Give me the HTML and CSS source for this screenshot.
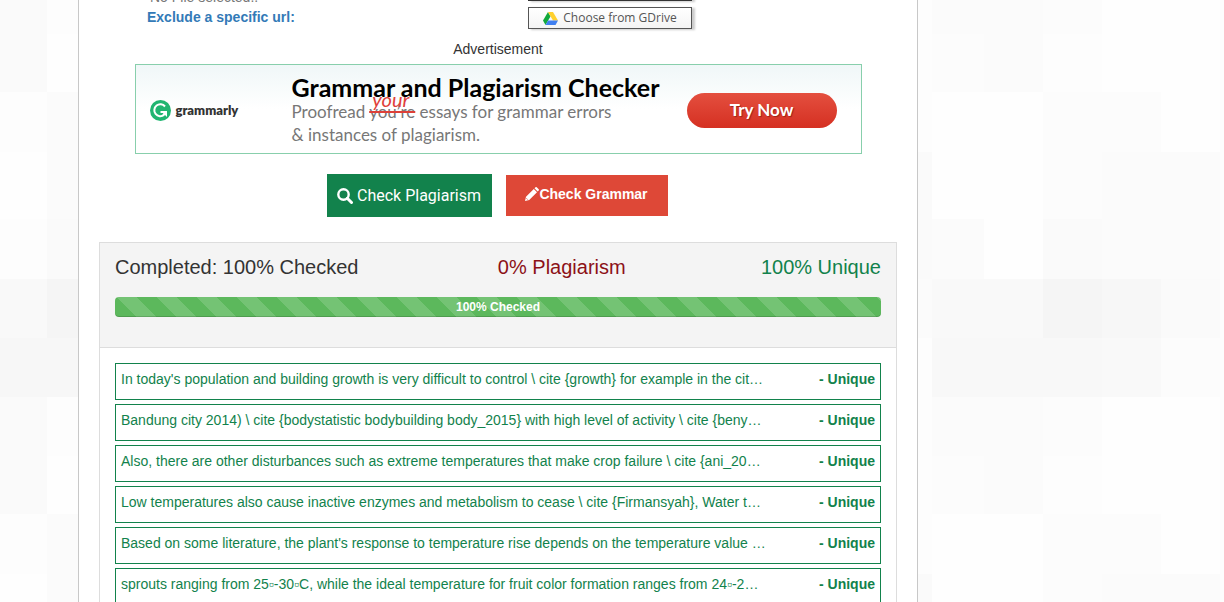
FILE: index.html
```html
<!DOCTYPE html>
<html lang="en">
<head>
<meta charset="utf-8">
<meta name="viewport" content="width=device-width, initial-scale=1">
<title>Plagiarism Checker</title>
<link rel="stylesheet" href="styles.css">
</head>
<body>
<svg class="backdrop" aria-hidden="true">
  <defs>
    <pattern id="tiles" x="0" y="-330" width="1920" height="422" patternUnits="userSpaceOnUse">
      <rect width="1920" height="422" fill="#fdfdfd"/>
      <rect y="60" width="47" height="67" fill="#fefefe"/>
      <rect y="187" width="47" height="59" fill="#f9f9f9"/>
      <rect y="246" width="47" height="59" fill="#f7f7f7"/>
      <rect y="305" width="47" height="117" fill="#fafafa"/>
      <rect x="47" y="0" width="60" height="127" fill="#fbfbfb"/>
      <rect x="47" y="127" width="60" height="60" fill="#fafafa"/>
      <rect x="47" y="187" width="60" height="59" fill="#f5f5f5"/>
      <rect x="47" y="246" width="60" height="59" fill="#f7f7f7"/>
      <rect x="47" y="305" width="60" height="59" fill="#fdfdfd"/>
      <rect x="47" y="364" width="60" height="58" fill="#fefefe"/>
      <rect x="900" y="60" width="32" height="127" fill="#fafafa"/>
      <rect x="900" y="187" width="32" height="59" fill="#fbfbfb"/>
      <rect x="932" y="0" width="111" height="127" fill="#fefefe"/>
      <rect x="932" y="127" width="52" height="60" fill="#fbfbfb"/>
      <rect x="984" y="127" width="59" height="60" fill="#fefefe"/>
      <rect x="932" y="187" width="111" height="59" fill="#f9f9f9"/>
      <rect x="932" y="246" width="170" height="59" fill="#f8f8f8"/>
      <rect x="932" y="305" width="52" height="59" fill="#fbfbfb"/>
      <rect x="932" y="364" width="52" height="58" fill="#fcfcfc"/>
      <rect x="984" y="305" width="59" height="117" fill="#fbfbfb"/>
      <rect x="1043" y="0" width="59" height="127" fill="#fcfcfc"/>
      <rect x="1043" y="127" width="59" height="60" fill="#fafafa"/>
      <rect x="1043" y="187" width="59" height="59" fill="#f5f5f5"/>
      <rect x="1043" y="305" width="59" height="59" fill="#fcfcfc"/>
      <rect x="1102" y="0" width="59" height="60" fill="#fcfcfc"/>
      <rect x="1102" y="60" width="59" height="127" fill="#fbfbfb"/>
      <rect x="1102" y="187" width="59" height="59" fill="#f7f7f7"/>
      <rect x="1102" y="246" width="59" height="59" fill="#f9f9f9"/>
      <rect x="1102" y="305" width="118" height="117" fill="#fefefe"/>
      <rect x="1161" y="0" width="59" height="60" fill="#fefefe"/>
      <rect x="1161" y="60" width="59" height="127" fill="#fbfbfb"/>
      <rect x="1161" y="187" width="59" height="59" fill="#fafafa"/>
      <rect x="1161" y="246" width="59" height="59" fill="#fcfcfc"/>
    </pattern>
  </defs>
  <rect width="100%" height="100%" fill="url(#tiles)"/>
</svg>

<div class="layout">
  <main class="page">
    <section class="sources">
      <div class="source-labels">
        <span class="file-status">No File selected..</span>
        <span class="exclude">Exclude a specific url:</span>
      </div>
      <div class="pickers">
        <button class="picker picker-dark" type="button" aria-label="Choose file"></button>
        <button class="picker" type="button">
          <svg class="drive" viewBox="0 0 30 26" aria-hidden="true">
            <path fill="#12a83c" d="M10 0 15 9 5 26 0 17z"/>
            <path fill="#ffd02e" d="M10 0h10l10 17H20z"/>
            <path fill="#3f7ff0" d="M10 17h20l-5 9H5z"/>
          </svg>
          <span>Choose from GDrive</span>
        </button>
      </div>
    </section>

    <p class="ad-label">Advertisement</p>
    <aside class="ad">
      <div class="brand">
        <svg class="brand-mark" viewBox="0 0 42 42" aria-hidden="true">
          <circle cx="21" cy="21" r="21" fill="#20b571"/>
          <path fill="none" stroke="#fff" stroke-width="4" d="M30 13A12 12 0 1 0 28 30"/>
          <path fill="#fff" d="M21 22h13v12l-4-4-3 2-2-3 2-3h-6z"/>
        </svg>
        <span>grammarly</span>
      </div>
      <div class="ad-copy">
        <strong class="ad-title">Grammar and Plagiarism Checker</strong>
        <span class="ad-line">Proofread <span class="fix"><span class="wrong">you’re</span><span class="right">your</span></span> essays for grammar errors</span>
        <span class="ad-line">&amp; instances of plagiarism.</span>
      </div>
      <button class="try" type="button">Try Now</button>
    </aside>

    <div class="actions">
      <button class="check check-plagiarism" type="button">
        <svg class="glass" viewBox="0 0 16 16" aria-hidden="true"><circle cx="6.500" cy="6.500" r="5.200" fill="none" stroke="#fff" stroke-width="2.400"/><path d="M10.300 10.300 14.500 14.500" stroke="#fff" stroke-width="3" stroke-linecap="round"/></svg>
        <span>Check Plagiarism</span>
      </button>
      <button class="check check-grammar" type="button">
        <svg class="pencil" viewBox="0 0 14 14" aria-hidden="true"><path fill="#fff" d="M0 14 1 9.800 8.800 2 12 5.200 4.200 13zM9.500 1.300 10.500.3Q11.100-.2 11.700.3L13.700 2.300Q14.200 2.900 13.700 3.500L12.700 4.500z"/><path stroke="#de4837" stroke-width=".7" d="M1.300 11.200 2.800 12.700"/></svg>
        <span>Check Grammar</span>
      </button>
    </div>

    <section class="report">
      <header class="summary">
        <div class="totals">
          <span>Completed: 100% Checked</span>
          <span class="plagiarised">0% Plagiarism</span>
          <span class="unique">100% Unique</span>
        </div>
        <div class="progress" role="progressbar" aria-valuenow="100" aria-valuemin="0" aria-valuemax="100">100% Checked</div>
      </header>
      <ul class="results">
        <li class="result"><span>In today's population and building growth is very difficult to control \ cite {growth} for example in the cit…</span><strong>- Unique</strong></li>
        <li class="result"><span>Bandung city 2014) \ cite {bodystatistic bodybuilding body_2015} with high level of activity \ cite {beny…</span><strong>- Unique</strong></li>
        <li class="result"><span>Also, there are other disturbances such as extreme temperatures that make crop failure \ cite {ani_20…</span><strong>- Unique</strong></li>
        <li class="result"><span>Low temperatures also cause inactive enzymes and metabolism to cease \ cite {Firmansyah}, Water t…</span><strong>- Unique</strong></li>
        <li class="result"><span>Based on some literature, the plant's response to temperature rise depends on the temperature value …</span><strong>- Unique</strong></li>
        <li class="result"><span>sprouts ranging from 25▫-30▫C, while the ideal temperature for fruit color formation ranges from 24▫-2…</span><strong>- Unique</strong></li>
      </ul>
    </section>
  </main>
</div>
</body>
</html>
```
FILE: styles.css
```css
* { box-sizing: border-box; }

body {
  margin: 0;
  height: 100vh;
  overflow: hidden;
  color: #333;
  font: 14px/20px "Liberation Sans", Arial, sans-serif;
}

button { border: 0; cursor: pointer; }

.backdrop {
  position: fixed;
  z-index: -1;
  inset: 0;
  width: 100%;
  height: 100%;
}

.layout {
  display: grid;
  grid-template-columns: 78fr 840fr 306fr;
}

.page {
  grid-column: 2;
  margin-top: -20px;
  padding: 0 20px 20px;
  background: #fff;
  border: solid #c8c8c8;
  border-width: 0 1px;
}

.sources {
  display: grid;
  grid-template-columns: 381fr 369fr;
  padding: 0 0 10px 48px;
}

.source-labels {
  display: flex;
  flex-direction: column;
  padding-top: 7px;
}

.file-status { padding-left: 3px; color: #777; }
.exclude { color: #337ab7; font-weight: bold; }

.pickers {
  display: flex;
  flex-direction: column;
  align-items: flex-start;
  gap: 6px;
}

.picker {
  display: flex;
  align-items: center;
  justify-content: center;
  gap: 5px;
  width: 164px;
  height: 22px;
  padding: 0;
  color: #555;
  background: linear-gradient(#fff, #f4f4f4);
  border: 1px solid #555;
  box-shadow: 3px 1px 2px #ccc;
  font: 12px/20px "Open Sans", sans-serif;
}

.picker-dark { height: 21px; border-color: #333; }
.drive { width: 15px; height: 13px; }

.ad-label { margin: 0; text-align: center; }

.ad {
  display: flex;
  align-items: center;
  width: 100%;
  max-width: 727px;
  height: 90px;
  margin: 5px auto 20px;
  padding: 2px 24px 0 14px;
  color: #333;
  background: linear-gradient(#f0f7f8, #fff 50%);
  border: 1px solid #88cfac;
  font-family: Lato, sans-serif;
}

.brand {
  display: flex;
  flex: 0 0 142px;
  align-items: center;
  gap: 5px;
  font: 800 13px/20px Lato, sans-serif;
}

.brand-mark { width: 21px; height: 21px; }

.ad-copy {
  display: flex;
  flex: 1;
  flex-direction: column;
  white-space: nowrap;
}

.ad-title { color: #000; font-size: 25px; line-height: 26px; }
.ad-line { color: #777; font-size: 17px; line-height: 23px; }
.fix { position: relative; }
.wrong { text-decoration: line-through 2px #dd4039; }

.right {
  position: absolute;
  bottom: 13px;
  left: 3px;
  color: #e0403a;
  font-size: 20px;
  font-style: italic;
  line-height: 20px;
}

.try {
  width: 150px;
  height: 35px;
  color: #fff;
  background: linear-gradient(#e44f3f, #d53022);
  border-radius: 18px;
  font: bold 17px/20px Lato, sans-serif;
  text-shadow: 1px 1px 1px #9c2218;
}

.actions {
  display: flex;
  align-items: center;
  justify-content: center;
  gap: 14px;
  margin-bottom: 25px;
  padding-right: 2px;
}

.check {
  display: flex;
  align-items: center;
  justify-content: center;
  color: #fff;
}

.check-plagiarism {
  gap: 4px;
  width: 165px;
  height: 43px;
  padding: 0;
  background: #12824c;
  font: 16px/24px Roboto, sans-serif;
}

.check-grammar {
  width: 162px;
  height: 41px;
  padding: 0 0 4px;
  background: #de4837;
  font: bold 14px/20px "Liberation Sans", Arial, sans-serif;
}

.glass { width: 16px; height: 16px; }
.pencil { width: 14px; height: 14px; }

.report { border: 1px solid #ddd; }

.summary {
  padding: 12px 15px 30px;
  background: #f4f4f4;
  border-bottom: 1px solid #ddd;
}

.totals {
  display: grid;
  grid-template-columns: 1fr 1fr 1fr;
  margin-bottom: 18px;
  font-size: 20px;
  line-height: 24px;
}

.plagiarised { color: #8c1117; text-align: right; }
.unique { color: #12824c; text-align: right; }

.progress {
  height: 20px;
  color: #fff;
  background-color: #5cb85c;
  background-image: linear-gradient(45deg, rgba(255, 255, 255, .15) 25%, transparent 25%, transparent 50%, rgba(255, 255, 255, .15) 50%, rgba(255, 255, 255, .15) 75%, transparent 75%);
  background-position: 2px 0;
  background-size: 40px 40px;
  border-radius: 4px;
  box-shadow: inset 0 -1px 0 rgba(0, 0, 0, .15);
  font-size: 12px;
  font-weight: bold;
  text-align: center;
}

.results {
  display: flex;
  flex-direction: column;
  gap: 4px;
  margin: 0;
  padding: 15px;
  list-style: none;
}

.result {
  display: flex;
  justify-content: space-between;
  gap: 10px;
  padding: 5px 5px 10px;
  color: #12824c;
  border: 1px solid #12824c;
}
```
